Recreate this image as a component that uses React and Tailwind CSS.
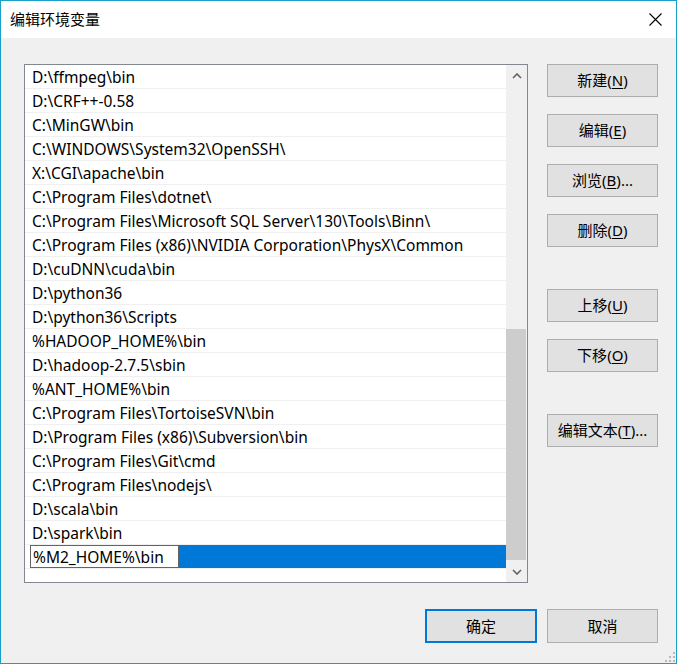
const paths = [
  "D:\\ffmpeg\\bin",
  "D:\\CRF++-0.58",
  "C:\\MinGW\\bin",
  "C:\\WINDOWS\\System32\\OpenSSH\\",
  "X:\\CGI\\apache\\bin",
  "C:\\Program Files\\dotnet\\",
  "C:\\Program Files\\Microsoft SQL Server\\130\\Tools\\Binn\\",
  "C:\\Program Files (x86)\\NVIDIA Corporation\\PhysX\\Common",
  "D:\\cuDNN\\cuda\\bin",
  "D:\\python36",
  "D:\\python36\\Scripts",
  "%HADOOP_HOME%\\bin",
  "D:\\hadoop-2.7.5\\sbin",
  "%ANT_HOME%\\bin",
  "C:\\Program Files\\TortoiseSVN\\bin",
  "D:\\Program Files (x86)\\Subversion\\bin",
  "C:\\Program Files\\Git\\cmd",
  "C:\\Program Files\\nodejs\\",
  "D:\\scala\\bin",
  "D:\\spark\\bin",
];

function Btn({ label, hotkey, dots, className = "" }) {
  return (
    <button
      className={
        "w-[111px] h-[33px] bg-[#e1e1e1] border border-[#adadad] text-[15px] text-black flex items-center justify-center " +
        className
      }
    >
      {label}
      {hotkey && (
        <span>
          (<span className="underline underline-offset-2">{hotkey}</span>)
        </span>
      )}
      {dots && <span>...</span>}
    </button>
  );
}

export default function App() {
  return (
    <div
      className="relative w-[677px] h-[664px] border border-[#1a9fc9] bg-[#f0f0f0] flex flex-col"
      style={{ fontFamily: '"Noto Sans", "Noto Sans CJK SC", sans-serif' }}
    >
      {/* title bar */}
      <div className="h-[37px] bg-white flex items-center justify-between pl-[9px] pr-[14px]">
        <span className="text-[15px] text-black">编辑环境变量</span>
        <svg width="13" height="13" viewBox="0 0 13 13">
          <path d="M0.5 0.5 L12.5 12.5 M12.5 0.5 L0.5 12.5" stroke="#000" strokeWidth="1.1" />
        </svg>
      </div>

      <div className="flex pl-[23px] pt-[26px]">
        {/* list box */}
        <div className="w-[504px] h-[519px] border border-[#828790] bg-white flex">
          <div className="flex-1 flex flex-col">
            {paths.map((p) => (
              <div
                key={p}
                className="h-[24px] border-b border-[#f0f0f0] flex items-center pl-[7px] pt-[3px] text-[15.5px] text-black whitespace-nowrap"
              >
                {p}
              </div>
            ))}
            <div className="h-[24px] border-b border-[#f0f0f0] flex items-stretch pl-[5px]">
              <div className="w-[149px] bg-white border border-[#646464] flex items-center pl-[2px] pt-[2px] text-[15.5px] text-black">
                %M2_HOME%\bin
              </div>
              <div className="flex-1 bg-[#0078d7]"></div>
            </div>
          </div>
          {/* scrollbar */}
          <div className="w-[21px] bg-[#f0f0f0] flex flex-col">
            <div className="h-[21px] flex items-center justify-center">
              <svg width="10" height="6" viewBox="0 0 10 6">
                <path d="M1 5 L5 1 L9 5" fill="none" stroke="#606060" strokeWidth="1.6" />
              </svg>
            </div>
            <div className="flex-1 flex flex-col justify-end pb-[1px]">
              <div className="h-[231px] bg-[#cdcdcd] mr-[1px]"></div>
            </div>
            <div className="h-[21px] flex items-center justify-center">
              <svg width="10" height="6" viewBox="0 0 10 6">
                <path d="M1 1 L5 5 L9 1" fill="none" stroke="#606060" strokeWidth="1.6" />
              </svg>
            </div>
          </div>
        </div>

        {/* right buttons */}
        <div className="ml-[19px] flex flex-col">
          <Btn label="新建" hotkey="N" />
          <Btn label="编辑" hotkey="E" className="mt-[17px]" />
          <Btn label="浏览" hotkey="B" dots className="mt-[17px]" />
          <Btn label="删除" hotkey="D" className="mt-[17px]" />
          <Btn label="上移" hotkey="U" className="mt-[42px]" />
          <Btn label="下移" hotkey="O" className="mt-[17px]" />
          <Btn label="编辑文本" hotkey="T" dots className="mt-[42px]" />
        </div>
      </div>

      {/* bottom buttons */}
      <div className="flex justify-end gap-[10px] pr-[18px] mt-[26px]">
        <button className="w-[112px] h-[34px] bg-[#e1e1e1] border-2 border-[#0078d7] text-[15px] text-black">
          确定
        </button>
        <button className="w-[111px] h-[34px] bg-[#e1e1e1] border border-[#adadad] text-[15px] text-black">
          取消
        </button>
      </div>

      {/* resize grip */}
      <svg className="absolute right-[1px] bottom-[1px]" width="12" height="12" viewBox="0 0 12 12">
        <rect x="10" y="2" width="2" height="2" fill="#b8b8b8" />
        <rect x="6" y="6" width="2" height="2" fill="#b8b8b8" />
        <rect x="10" y="6" width="2" height="2" fill="#b8b8b8" />
        <rect x="2" y="10" width="2" height="2" fill="#b8b8b8" />
        <rect x="6" y="10" width="2" height="2" fill="#b8b8b8" />
        <rect x="10" y="10" width="2" height="2" fill="#b8b8b8" />
      </svg>
    </div>
  );
}
